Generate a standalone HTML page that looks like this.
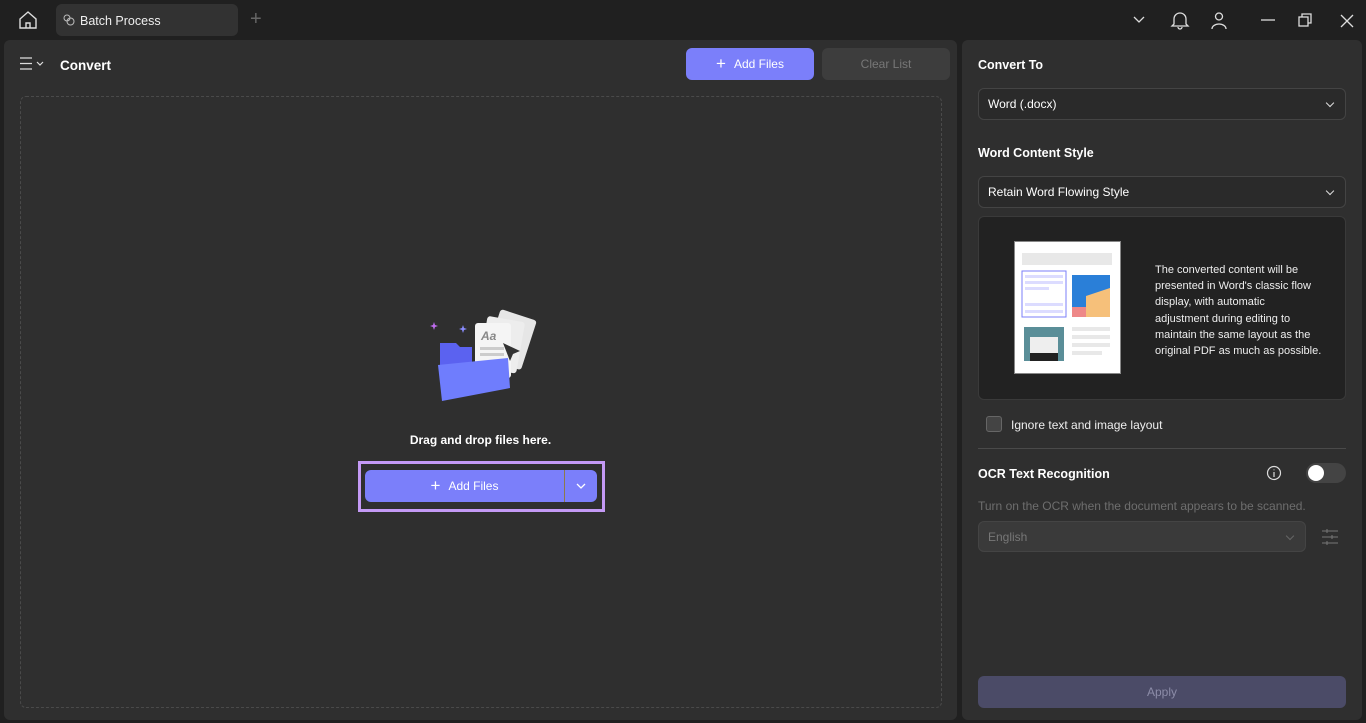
<!DOCTYPE html>
<html><head><meta charset="utf-8"><style>
*{box-sizing:border-box;margin:0;padding:0}
body{width:1366px;height:723px;background:#202020;font-family:"Liberation Sans",sans-serif;color:#fff;position:relative;overflow:hidden;font-size:12px}
.abs{position:absolute}
.panel{background:#2f2f2f;border-radius:6px}
.btn{position:absolute;border-radius:6px;display:flex;align-items:center;justify-content:center;font-size:12px}
.sel{position:absolute;left:978px;width:368px;height:32px;border:1px solid #444;border-radius:6px;background:#2a2a2a;font-size:12px;display:flex;align-items:center;padding-left:9px}
.chev{position:absolute;right:12px;top:11px;width:6px;height:6px;border-right:1.3px solid #ddd;border-bottom:1.3px solid #ddd;transform:rotate(45deg)}
.b{font-weight:bold;font-size:12.5px}
</style></head><body>
<svg class="abs" style="left:17px;top:9px" width="22" height="22" viewBox="0 0 22 22" fill="none" stroke="#ddd" stroke-width="1.4"><path d="M3 10L11 3l8 7v9H3z"/><path d="M9 19v-5h4v5"/></svg>
<div class="abs" style="left:56px;top:4px;width:182px;height:32px;background:#323232;border-radius:6px"></div>
<svg class="abs" style="left:63px;top:14px" width="12" height="12" viewBox="0 0 12 12" fill="none" stroke="#bbb" stroke-width="1"><circle cx="4" cy="4" r="3"/><circle cx="7.5" cy="7.5" r="3.5"/></svg>
<div class="abs" style="left:80px;top:14px;font-size:12.5px;color:#eee">Batch Process</div>
<div class="abs" style="left:250px;top:8px;font-size:20px;color:#666;font-weight:300">+</div>
<svg class="abs" style="left:1130px;top:12px" width="240" height="18" fill="none" stroke="#ddd" stroke-width="1.3">
<path d="M4 5l5 5 5-5"/>
<path d="M44 12V7a6 6 0 0112 0v5l2 2H42z M48 15a2 2 0 004 0"/>
<circle cx="89" cy="4.5" r="3.5"/><path d="M82 17a7 5 0 0114 0"/>
<path d="M131 8h14"/>
<rect x="169" y="5" width="9" height="9"/><path d="M172 5V2h9v9h-3"/>
<path d="M211 3l12 12M223 3l-12 12"/>
</svg>
<div class="abs panel" style="left:4px;top:40px;width:953px;height:680px"></div>
<svg class="abs" style="left:19px;top:57px" width="28" height="14" fill="none" stroke="#ddd" stroke-width="1.2"><path d="M1 1h12M1 6.5h12M1 12h12M18 5l3 3 3-3"/></svg>
<div class="abs" style="left:60px;top:58px;font-weight:bold;font-size:13.5px">Convert</div>
<div class="btn" style="left:686px;top:48px;width:128px;height:32px;background:#7b7ffa"><span style="font-size:17px;margin-right:8px;font-weight:300">+</span>Add Files</div>
<div class="btn" style="left:822px;top:48px;width:128px;height:32px;background:#3d3d3d;color:#777">Clear List</div>
<div class="abs" style="left:20px;top:96px;width:922px;height:612px;border:1px dashed #4a4a4a;border-radius:6px"></div>
<svg class="abs" style="left:428px;top:305px" width="112" height="100">
<path d="M6 17l1 3 3 1-3 1-1 3-1-3-3-1 3-1z" fill="#c06cf0"/>
<path d="M35 20l1 3 3 1-3 1-1 3-1-3-3-1 3-1z" fill="#8a8cff"/>
<g transform="rotate(18 80 40)"><rect x="62" y="8" width="38" height="52" rx="3" fill="#e6e6e6"/></g>
<g transform="rotate(10 75 45)"><rect x="54" y="14" width="38" height="52" rx="3" fill="#ededed"/></g>
<rect x="47" y="18" width="36" height="55" rx="3" fill="#f5f5f5"/>
<text x="53" y="35" font-size="12" font-style="italic" font-weight="bold" fill="#888" font-family="Liberation Sans">Aa</text>
<rect x="52" y="42" width="24" height="3" fill="#ccc"/><rect x="52" y="48" width="24" height="3" fill="#ccc"/>
<path d="M75 38l17 8-7 3-3 7z" fill="#333"/>
<path d="M12 38h16l4 4h12v20H12z" fill="#5b62f0"/>
<path d="M10 60l70-7 2 30-68 13z" fill="#6f7dfd"/>
</svg>
<div class="abs" style="left:0;width:961px;top:433px;text-align:center;font-weight:bold;font-size:12px">Drag and drop files here.</div>
<div class="abs" style="left:358px;top:461px;width:247px;height:51px;border:3px solid #c49af5"></div>
<div class="btn" style="left:365px;top:470px;width:232px;height:32px;background:#7b7ffa"></div>
<div class="abs" style="left:564px;top:470px;width:1px;height:32px;background:#8c7a4a"></div>
<div class="abs" style="left:365px;top:470px;width:199px;height:32px;display:flex;align-items:center;justify-content:center;font-size:12px"><span style="font-size:17px;margin-right:8px;font-weight:300">+</span>Add Files</div>
<svg class="abs" style="left:575px;top:482px" width="12" height="8" fill="none" stroke="#fff" stroke-width="1.3"><path d="M2 2l4 4 4-4"/></svg>
<div class="abs panel" style="left:962px;top:40px;width:400px;height:680px"></div>
<div class="abs b" style="left:978px;top:58px">Convert To</div>
<div class="sel" style="top:88px">Word (.docx)<span class="chev"></span></div>
<div class="abs b" style="left:978px;top:146px">Word Content Style</div>
<div class="sel" style="top:176px">Retain Word Flowing Style<span class="chev"></span></div>
<div class="abs" style="left:978px;top:216px;width:368px;height:184px;background:#222;border:1px solid #3a3a3a;border-radius:6px"></div>
<svg class="abs" style="left:1014px;top:241px" width="107" height="133">
<rect x="0.5" y="0.5" width="106" height="132" fill="#fff" stroke="#888"/>
<rect x="8" y="12" width="90" height="12" fill="#e8e8e8"/>
<rect x="8" y="30" width="44" height="46" fill="none" stroke="#7b7ffa"/>
<rect x="11" y="34" width="38" height="3" fill="#dcdcff"/><rect x="11" y="40" width="38" height="3" fill="#dcdcff"/><rect x="11" y="46" width="24" height="3" fill="#dcdcff"/><rect x="11" y="62" width="38" height="3" fill="#dcdcff"/><rect x="11" y="69" width="38" height="3" fill="#dcdcff"/>
<rect x="58" y="34" width="38" height="42" fill="#2a7fd8"/><path d="M72 76V55l24-8v29z" fill="#f6c07a"/><path d="M58 66h14v10H58z" fill="#e88"/>
<rect x="10" y="86" width="40" height="34" fill="#5a8e98"/><rect x="16" y="96" width="28" height="18" fill="#eee"/><rect x="16" y="112" width="28" height="8" fill="#222"/>
<rect x="58" y="86" width="38" height="4" fill="#e8e8e8"/><rect x="58" y="94" width="38" height="4" fill="#e8e8e8"/><rect x="58" y="102" width="38" height="4" fill="#e8e8e8"/><rect x="58" y="110" width="30" height="4" fill="#e8e8e8"/>
</svg>
<div class="abs" style="left:1155px;top:262px;width:200px;font-size:11px;line-height:16.2px;color:#eee;white-space:nowrap">The converted content will be<br>presented in Word's classic flow<br>display, with automatic<br>adjustment during editing to<br>maintain the same layout as the<br>original PDF as much as possible.</div>
<div class="abs" style="left:986px;top:416px;width:16px;height:16px;border:1px solid #666;border-radius:3px;background:#444"></div>
<div class="abs" style="left:1011px;top:418px;font-size:12px;color:#eee">Ignore text and image layout</div>
<div class="abs" style="left:978px;top:448px;width:368px;height:1px;background:#4a4a4a"></div>
<div class="abs b" style="left:978px;top:467px">OCR Text Recognition</div>
<svg class="abs" style="left:1266px;top:465px" width="16" height="16" fill="none" stroke="#ddd" stroke-width="1.2"><circle cx="8" cy="8" r="6.5"/><path d="M8 7v5M8 4.5v.8"/></svg>
<div class="abs" style="left:1306px;top:463px;width:40px;height:20px;border-radius:10px;background:#444"></div>
<div class="abs" style="left:1308px;top:465px;width:16px;height:16px;border-radius:50%;background:#fff"></div>
<div class="abs" style="left:978px;top:499px;font-size:12px;color:#6e6e6e">Turn on the OCR when the document appears to be scanned.</div>
<div class="sel" style="top:521px;width:328px;height:31px;background:#3a3a3a;border-color:#444;color:#777">English<span class="chev" style="border-color:#666"></span></div>
<svg class="abs" style="left:1321px;top:528px" width="18" height="18" stroke="#777" stroke-width="1"><path d="M1 3h16M1 9h16M1 15h16"/><path d="M6 1v4M11 7v4M6 13v4"/></svg>
<div class="btn" style="left:978px;top:676px;width:368px;height:32px;background:#4b4b67;color:#8c8ca8">Apply</div>
</body></html>
